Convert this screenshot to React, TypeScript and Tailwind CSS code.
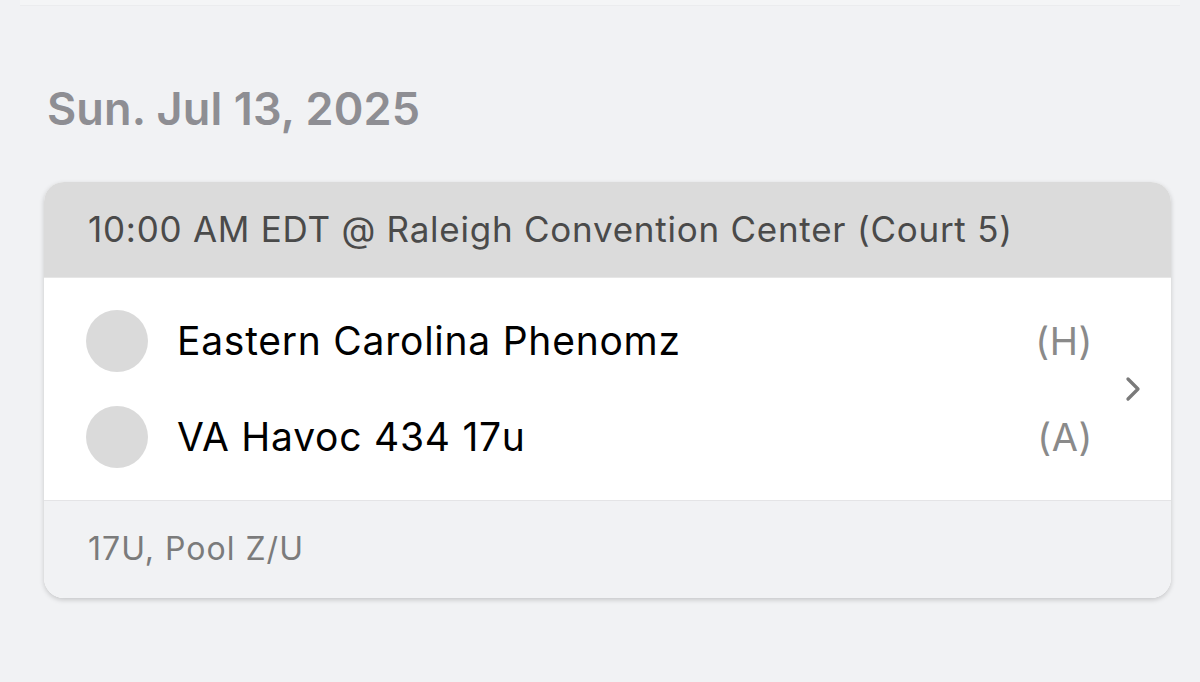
import React from 'react';
import { ChevronRight } from 'lucide-react';

type Team = { name: string; side: string };

const teams: Team[] = [
  { name: 'Eastern Carolina Phenomz', side: '(H)' },
  { name: 'VA Havoc 434 17u', side: '(A)' },
];

const App: React.FC = () => {
  return (
    <div className="w-[1200px] h-[682px] bg-[#f1f2f4] overflow-hidden font-['Inter',sans-serif]">
      {/* tail of the previous card */}
      <div className="mx-[20px] h-[6px] bg-[#f4f5f6] border-b border-[#ebecee]" />

      <div className="pl-[47px] pr-[29px] pt-[78px]">
        <h2 className="text-[45px] leading-[50px] font-semibold text-[#8e8e93] tracking-[0.1px]">
          Sun. Jul 13, 2025
        </h2>

        <div className="mt-[48px] -ml-[3px] rounded-[20px] overflow-hidden bg-white shadow-[0_2px_5px_rgba(0,0,0,0.18)]">
          {/* Header */}
          <div className="h-[96px] bg-[#dbdbdb] flex items-center pl-[44px] border-b border-[#e6e6e6]">
            <span className="text-[35px] text-[#4a4a4a] tracking-[0.75px]">
              10:00 AM EDT @ Raleigh Convention Center (Court 5)
            </span>
          </div>

          {/* Teams */}
          <div className="flex items-center bg-white h-[222px]">
            <div className="flex-1 flex flex-col gap-[34px] pl-[42px]">
              {teams.map((t) => (
                <div key={t.name} className="flex items-center h-[62px]">
                  <div className="w-[62px] h-[62px] rounded-full bg-[#dadada] flex-shrink-0" />
                  <span className="ml-[29px] text-[39px] text-black tracking-[0.75px]">
                    {t.name}
                  </span>
                  <span className="ml-auto mr-[-2px] text-[38px] text-[#8a8a8a] tracking-[0.6px]">{t.side}</span>
                </div>
              ))}
            </div>
            <div className="w-[80px] flex justify-center pl-[4px]">
              <ChevronRight className="w-[40px] h-[40px] text-[#7a7a7a]" strokeWidth={2} />
            </div>
          </div>

          {/* Footer */}
          <div className="h-[98px] bg-[#f1f2f4] border-t border-[#e4e4e6] flex items-center pl-[44px]">
            <span className="text-[32px] text-[#7b7b7b] tracking-[1px] -mt-[2px]">17U, Pool Z/U</span>
          </div>
        </div>
      </div>
    </div>
  );
};

export default App;
